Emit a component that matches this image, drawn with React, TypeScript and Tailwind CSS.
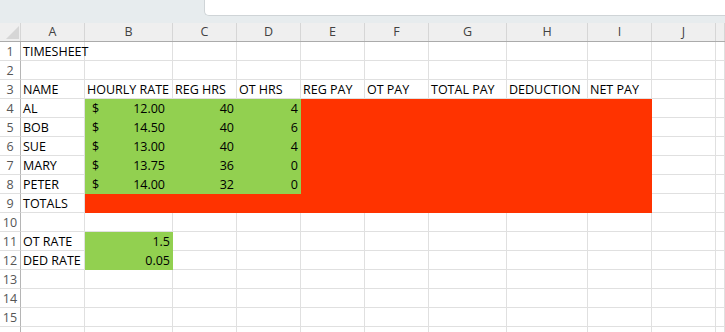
import React from "react";

type Cell = { v?: string; right?: boolean; fill?: "g" | "r"; acc?: boolean };

const colWidths = "grid-cols-[21px_64px_88px_64px_64px_64px_64px_78px_81px_64px_64px_1fr]";
const letters = ["A", "B", "C", "D", "E", "F", "G", "H", "I", "J", ""];

const red: Cell = { fill: "r" };

const people = [
  ["AL", "12.00", "40", "4"],
  ["BOB", "14.50", "40", "6"],
  ["SUE", "13.00", "40", "4"],
  ["MARY", "13.75", "36", "0"],
  ["PETER", "14.00", "32", "0"],
];

// every row is A..K (11 cells)
const rows: Cell[][] = [
  [{ v: "TIMESHEET" }],
  [],
  ["NAME", "HOURLY RATE", "REG HRS", "OT HRS", "REG PAY", "OT PAY", "TOTAL PAY", "DEDUCTION", "NET PAY"].map((v) => ({ v })),
  ...people.map(([name, rate, reg, ot]) => [
    { v: name },
    { v: rate, acc: true, fill: "g" as const },
    { v: reg, right: true, fill: "g" as const },
    { v: ot, right: true, fill: "g" as const },
    red, red, red, red, red,
  ]),
  [{ v: "TOTALS" }, red, red, red, red, red, red, red, red],
  [],
  [{ v: "OT RATE" }, { v: "1.5", right: true, fill: "g" }],
  [{ v: "DED RATE" }, { v: "0.05", right: true, fill: "g" }],
  [],
  [],
  [],
  [],
];

function GridCell({ cell }: { cell?: Cell }) {
  const c = cell ?? {};
  const fillClass =
    c.fill === "g"
      ? "bg-[#92d050] border-[#92d050]"
      : c.fill === "r"
      ? "bg-[#ff3300] border-[#ff3300]"
      : "border-[#e0e0e0]";

  if (c.acc) {
    return (
      <div className={`h-[19px] border-r border-b flex justify-between items-center px-[7px] pt-[3px] ${fillClass}`}>
        <span>$</span>
        <span>{c.v}</span>
      </div>
    );
  }

  return (
    <div
      className={`h-[19px] border-r border-b flex items-center pt-[3px] whitespace-nowrap ${
        c.right ? "justify-end pr-[2px]" : "justify-start pl-[2px]"
      } ${fillClass}`}
    >
      {c.v}
    </div>
  );
}

export default function App() {
  return (
    <div
      className="w-[725px] h-[332px] overflow-hidden bg-white text-black text-[12.5px] leading-none"
      style={{ fontFamily: '"Open Sans", "Noto Sans", sans-serif' }}
    >
      {/* ribbon strip with the formula box */}
      <div className="h-[23px] bg-[#e7ecee] flex">
        <div className="w-[204px]" />
        <div className="flex-1 h-[16px] bg-white border-l border-b border-[#cfd4d7] rounded-bl-[5px]" />
      </div>

      {/* column header */}
      <div className={`grid ${colWidths} h-[19px] bg-[#efefef] border-b border-[#ababab] text-[#424242]`}>
        <div className="border-r border-[#d6d6d6] flex items-end justify-end pr-[1px] pb-[2px]">
          <svg width="13" height="13" viewBox="0 0 13 13">
            <polygon points="13,0 13,13 0,13" fill="#d6d6d6" />
          </svg>
        </div>
        {letters.map((l, i) => (
          <div key={i} className="border-r border-[#d6d6d6] flex items-center justify-center pt-[1px]">
            {l}
          </div>
        ))}
      </div>

      {/* sheet body */}
      {rows.map((row, r) => (
        <div key={r} className={`grid ${colWidths}`}>
          <div className="h-[19px] border-r border-b border-r-[#b5b5b5] border-b-[#e0e0e0] flex items-center justify-center text-[#555555] pt-[3px]">
            {r + 1}
          </div>
          {letters.map((_, c) => (
            <GridCell key={c} cell={row[c]} />
          ))}
        </div>
      ))}
    </div>
  );
}
